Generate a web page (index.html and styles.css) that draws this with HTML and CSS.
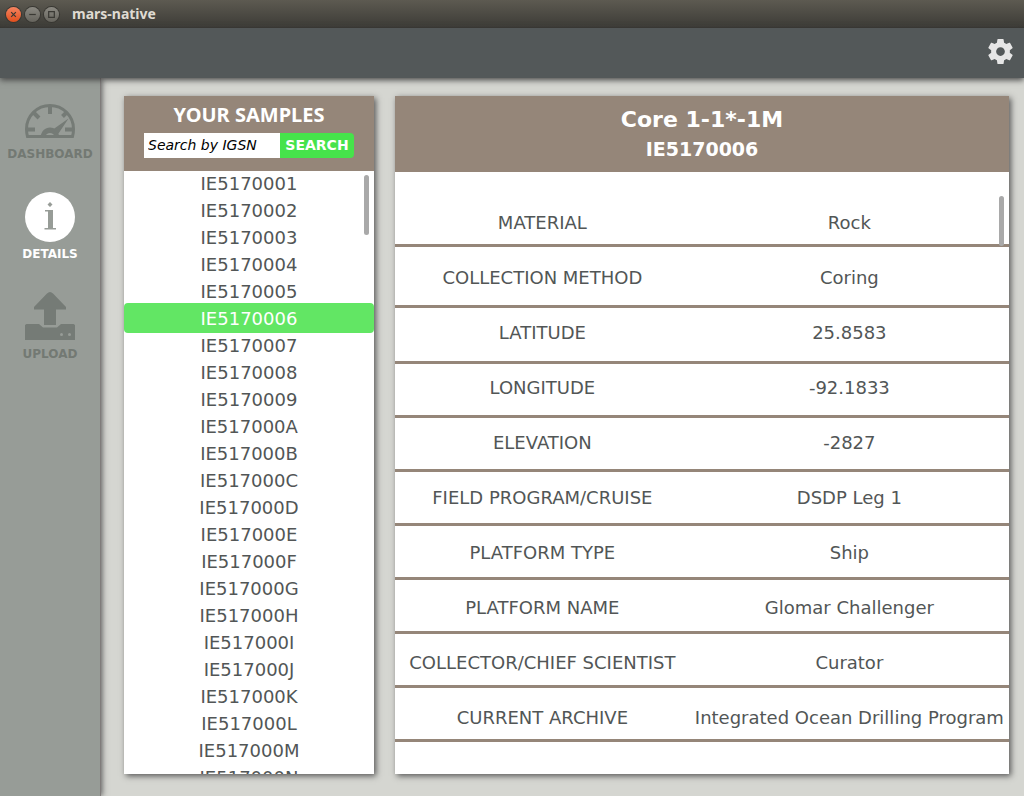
FILE: index.html
```html
<!DOCTYPE html>
<html lang="en">
<head>
<meta charset="utf-8">
<title>mars-native</title>
<link rel="stylesheet" href="styles.css">
</head>
<body>
<div class="window">
  <header class="titlebar">
    <button class="win-btn win-close" aria-label="Close"><svg viewBox="0 0 16 16"><path d="M5.500 5.500l5 5M10.500 5.500l-5 5"/></svg></button>
    <button class="win-btn" aria-label="Minimize"><svg viewBox="0 0 16 16"><path d="M4.500 8h7"/></svg></button>
    <button class="win-btn" aria-label="Maximize"><svg viewBox="0 0 16 16"><path d="M5 5h6v6H5z"/></svg></button>
    <span class="win-title">mars-native</span>
  </header>
  <div class="toolbar">
    <button class="gear" aria-label="Settings">
      <svg viewBox="2 2 20 20"><path d="M19.430 12.980c.04-.32.07-.64.07-.98s-.03-.66-.07-.98l2.110-1.650c.19-.15.24-.42.12-.64l-2-3.460c-.12-.22-.39-.3-.61-.22l-2.490 1c-.52-.4-1.080-.73-1.690-.98l-.38-2.650C14.460 2.180 14.250 2 14 2h-4c-.25 0-.46.18-.49.42l-.38 2.650c-.61.25-1.170.59-1.690.98l-2.490-1c-.23-.09-.49 0-.61.22l-2 3.460c-.13.22-.07.49.12.64l2.110 1.650c-.04.32-.07.65-.07.98s.03.66.07.98l-2.110 1.650c-.19.15-.24.42-.12.64l2 3.460c.12.22.39.3.61.22l2.490-1c.52.4 1.080.73 1.690.98l.38 2.650c.03.24.24.42.49.42h4c.25 0 .46-.18.49-.42l.38-2.650c.61-.25 1.170-.59 1.690-.98l2.490 1c.23.09.49 0 .61-.22l2-3.460c.12-.22.07-.49-.12-.64l-2.110-1.650zM12 15.500c-1.930 0-3.500-1.570-3.500-3.500s1.570-3.500 3.500-3.500 3.500 1.570 3.500 3.500-1.570 3.500-3.500 3.500z"/></svg>
    </button>
  </div>
  <div class="workspace">
    <nav class="sidebar">
      <a class="nav-item" href="#dashboard">
        <svg class="nav-icon" viewBox="0 0 50 34"><path class="line" d="M2.500 32.500Q1.500 29 1.500 25a23.500 23.500 0 0 1 47 0q0 4-1 7.500z"/><path class="line tick" d="M25 2v8M8.500 8.500l5.500 5.500M41.500 8.500l-4 4M2 25.500h8M40 25.500h8"/><path d="M43.500 14.500L32.500 31l-6-4.500zM15.500 33c1-6 4.500-9.500 9.500-9.500 4.500 0 8 3 9.500 9.500H30c-1.500-5.500-8.500-5.500-10 0z"/></svg>
        <span>DASHBOARD</span>
      </a>
      <a class="nav-item active" href="#details">
        <svg class="nav-icon" viewBox="0 0 50 50"><circle cx="25" cy="25" r="25"/><path class="cut" d="M25 10l2.500 2.500L25 15l-2.500-2.500zM20 18h8v18h3v1.500H19.500V36h3.500V19.500h-3z"/></svg>
        <span>DETAILS</span>
      </a>
      <a class="nav-item" href="#upload">
        <svg class="nav-icon" viewBox="0 0 50 50"><path d="M25 0q1.500 0 3 1.500L41 15v2.500H31V33H19V17.500H9V15L22 1.500Q23.500 0 25 0zM0 33l1.500-1H14l4 3.500h14l4-3.500h12.500l1.500 1v15H0z"/><circle class="dot" cx="36.500" cy="42.500" r="1.500"/><circle class="dot" cx="44.500" cy="42.500" r="1.500"/></svg>
        <span>UPLOAD</span>
      </a>
    </nav>
    <main class="content">
      <section class="card samples">
        <div class="samples-head">
          <h2>YOUR SAMPLES</h2>
          <form class="search">
            <input type="text" placeholder="Search by IGSN" aria-label="Search by IGSN">
            <button type="button">SEARCH</button>
          </form>
        </div>
        <ul class="sample-list">
          <li>IE5170001</li><li>IE5170002</li><li>IE5170003</li><li>IE5170004</li><li>IE5170005</li>
          <li class="selected">IE5170006</li><li>IE5170007</li><li>IE5170008</li><li>IE5170009</li>
          <li>IE517000A</li><li>IE517000B</li><li>IE517000C</li><li>IE517000D</li><li>IE517000E</li>
          <li>IE517000F</li><li>IE517000G</li><li>IE517000H</li><li>IE517000I</li><li>IE517000J</li>
          <li>IE517000K</li><li>IE517000L</li><li>IE517000M</li><li>IE517000N</li>
        </ul>
        <div class="thumb thumb-list"></div>
      </section>
      <section class="card details">
        <div class="details-head">
          <h1>Core 1-1*-1M</h1>
          <h2>IE5170006</h2>
        </div>
        <div class="details-body">
        <table class="fields">
          <tr><th scope="row">MATERIAL</th><td>Rock</td></tr>
          <tr><th scope="row">COLLECTION METHOD</th><td>Coring</td></tr>
          <tr><th scope="row">LATITUDE</th><td>25.8583</td></tr>
          <tr><th scope="row">LONGITUDE</th><td>-92.1833</td></tr>
          <tr><th scope="row">ELEVATION</th><td>-2827</td></tr>
          <tr><th scope="row">FIELD PROGRAM/CRUISE</th><td>DSDP Leg 1</td></tr>
          <tr><th scope="row">PLATFORM TYPE</th><td>Ship</td></tr>
          <tr><th scope="row">PLATFORM NAME</th><td>Glomar Challenger</td></tr>
          <tr><th scope="row">COLLECTOR/CHIEF SCIENTIST</th><td>Curator</td></tr>
          <tr><th scope="row">CURRENT ARCHIVE</th><td>Integrated Ocean Drilling Program</td></tr>
        </table>
        </div>
        <div class="thumb thumb-details"></div>
      </section>
    </main>
  </div>
</div>
</body>
</html>
```
FILE: styles.css
```css
* { box-sizing: border-box; }
body {
  margin: 0;
  font-family: Verdana, "DejaVu Sans", sans-serif;
  color: #525656;
}
h1, h2, ul { margin: 0; padding: 0; }
button { border: 0; padding: 0; font-family: inherit; }
.window { display: flex; flex-direction: column; height: 100vh; overflow: hidden; }

.titlebar {
  flex: none;
  display: flex;
  align-items: center;
  gap: 4px;
  height: 28px;
  padding: 0 6px;
  background: linear-gradient(#5d5a51, #3e3d38 26px, #33322e);
}
.win-btn {
  width: 15px;
  height: 15px;
  border-radius: 50%;
  background: linear-gradient(#8b8982, #66645d);
  box-shadow: 0 0 0 1px #393833;
}
.win-close { background: linear-gradient(#f58460, #e24f1d); }
.win-btn svg { display: block; fill: none; stroke: #3a3934; stroke-width: 1.3; }
.win-title {
  margin-left: 9px;
  font: bold 14px/20px "Noto Sans", sans-serif;
  color: #dfdbd2;
}

.toolbar {
  flex: none;
  display: flex;
  justify-content: flex-end;
  align-items: center;
  height: 50px;
  padding: 0 11px 4px;
  background: #535859;
  box-shadow: 0 2px 6px #444;
  position: relative;
  z-index: 2;
}
.gear { width: 25px; height: 25px; background: none; }
.gear svg { display: block; fill: #e6e6e6; }

.workspace { flex: 1; display: flex; min-height: 0; background: #d5d6d1; }
.sidebar {
  flex: none;
  display: flex;
  flex-direction: column;
  gap: 14px;
  width: 101px;
  padding: 14px 0;
  background: #979c97;
  border-right: 1px solid #807c7b;
  box-shadow: 1px 0 6px #555;
}
.nav-item {
  display: flex;
  flex-direction: column;
  align-items: center;
  height: 86px;
  font-size: 12px;
  font-weight: bold;
  line-height: 16px;
  color: #737973;
  text-decoration: none;
}
.nav-icon { width: 50px; height: 50px; margin-bottom: 4px; fill: #757b76; }
.nav-item:first-child .nav-icon { height: 34px; margin: 12px 0 8px; }
.nav-item.active { color: #fff; }
.active .nav-icon { fill: #fff; }
.line { fill: none; stroke: #757b76; stroke-width: 3; }
.tick { stroke-width: 4; }
.active .cut { fill: #979c97; }
.dot { fill: #979c97; }

.content { flex: 1; display: flex; gap: 21px; min-width: 0; padding: 18px 15px 22px 23px; }
.card {
  position: relative;
  display: flex;
  flex-direction: column;
  background: #fff;
  box-shadow: 2px 2px 6px #555;
}
.samples { flex: none; width: 250px; }
.details { flex: 1; min-width: 0; }
.samples-head {
  flex: none;
  height: 74px;
  padding: 6px 20px 0;
  background: #958679;
  box-shadow: 0 1px 0 #958679;
  color: #fff;
  text-align: center;
}
.samples-head h2 { font: bold 20px/26px "Noto Sans", sans-serif; }
.search { display: flex; height: 25px; margin-top: 5px; }
.search input {
  flex: 1;
  min-width: 0;
  border: 0;
  padding: 0 4px 2px;
  font: italic 14px "DejaVu Sans", sans-serif;
}
.search input::placeholder { color: #000; opacity: 1; }
.search button {
  width: 74px;
  padding-bottom: 1px;
  border-radius: 0 4px 4px 0;
  background: #46e34b;
  color: #fff;
  font-size: 14px;
  font-weight: bold;
}
.sample-list {
  flex: 1;
  min-height: 0;
  overflow: hidden;
  list-style: none;
  text-align: center;
  font-size: 18px;
  line-height: 27px;
}
.sample-list .selected {
  margin: -2px 0 -1px;
  padding: 2px 0 1px;
  border-radius: 4px;
  background: #62e664;
  color: #fff;
}
.thumb { position: absolute; width: 5px; border-radius: 3px; background: #a9a9a9; }
.thumb-list { top: 79px; right: 5px; height: 60px; }
.thumb-details { top: 100px; right: 5px; height: 50px; }

.details-head {
  flex: none;
  height: 76px;
  padding: 10px 0 0;
  background: #958679;
  color: #fff;
  text-align: center;
}
.details-head h1 { font-size: 22px; line-height: 28px; }
.details-head h2 { font-size: 19px; line-height: 30px; }
.details-body {
  flex: 1;
  min-height: 0;
  overflow: hidden;
  padding-top: 23px;
  background:
    linear-gradient(#958679, #958679) 0 72px / 100% 3px no-repeat,
    linear-gradient(#958679, #958679) 0 133px / 100% 3px no-repeat,
    repeating-linear-gradient(#958679 0 3px, #fff 3px 54px) 0 189px / 100% 381px no-repeat;
}
.fields { width: 100%; table-layout: fixed; border-collapse: collapse; font-size: 18px; }
.fields tr { height: 55px; }
.fields th { width: 48%; }
.fields th, .fields td { padding: 0; text-align: center; font-weight: normal; white-space: nowrap; }
```
